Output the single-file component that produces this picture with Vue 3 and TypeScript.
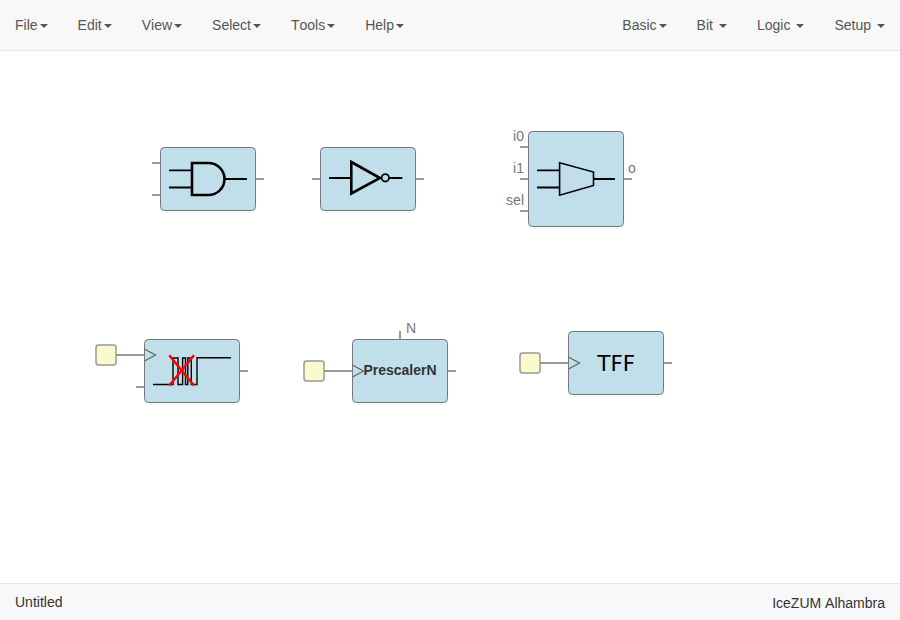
<script setup lang="ts">
interface MenuItem {
  label: string
  spaced?: boolean
}

interface Port {
  x: number
  y: number
  vertical?: boolean
}

interface Block {
  id: string
  x: number
  y: number
  height: number
  ports: Port[]
  clock?: number
}

interface Label {
  text: string
  x: number
  y: number
  end?: boolean
}

const editMenus: MenuItem[] = [
  { label: 'File' },
  { label: 'Edit' },
  { label: 'View' },
  { label: 'Select' },
  { label: 'Tools' },
  { label: 'Help' },
]

const blockMenus: MenuItem[] = [
  { label: 'Basic' },
  { label: 'Bit', spaced: true },
  { label: 'Logic', spaced: true },
  { label: 'Setup', spaced: true },
]

const blocks: Block[] = [
  { id: 'and', x: 160, y: 96, height: 64, ports: [{ x: -8, y: 16 }, { x: -8, y: 48 }, { x: 96, y: 32 }] },
  { id: 'not', x: 320, y: 96, height: 64, ports: [{ x: -8, y: 32 }, { x: 96, y: 32 }] },
  { id: 'mux', x: 528, y: 80, height: 96, ports: [{ x: -8, y: 16 }, { x: -8, y: 48 }, { x: -8, y: 80 }, { x: 96, y: 48 }] },
  { id: 'debouncer', x: 144, y: 288, height: 64, clock: 16, ports: [{ x: -8, y: 48 }, { x: 96, y: 32 }] },
  { id: 'prescaler', x: 352, y: 288, height: 64, clock: 32, ports: [{ x: 96, y: 32 }, { x: 48, y: -8, vertical: true }] },
  { id: 'tff', x: 568, y: 280, height: 64, clock: 32, ports: [{ x: 96, y: 32 }] },
]

const labels: Label[] = [
  { text: 'i0', x: 524, y: 90, end: true },
  { text: 'i1', x: 524, y: 122, end: true },
  { text: 'sel', x: 524, y: 154, end: true },
  { text: 'o', x: 628, y: 122 },
  { text: 'N', x: 406, y: 282 },
]

const portPath = (p: Port): string => `M${p.x} ${p.y}${p.vertical ? 'v8' : 'h8'}`
</script>

<template>
  <div class="app">
    <nav class="navbar">
      <ul class="menu">
        <li v-for="m in editMenus" :key="m.label">{{ m.label }}<b class="caret"></b></li>
      </ul>
      <ul class="menu">
        <li v-for="m in blockMenus" :key="m.label" :class="{ spaced: m.spaced }">{{ m.label }}<b class="caret"></b></li>
      </ul>
    </nav>

    <main class="paper">
      <svg width="900" height="532" viewBox="0 0 900 532">
        <g v-for="b in blocks" :key="b.id" :transform="`translate(${b.x} ${b.y})`">
          <path v-for="(p, i) in b.ports" :key="i" class="wire" :d="portPath(p)" />
          <template v-if="b.clock !== undefined">
            <path class="wire" :d="`M-28 ${b.clock}H0`" />
            <rect class="clock-source" x="-48" :y="b.clock - 10" width="20" height="20" rx="2.5" />
          </template>
          <rect class="body" x="0.5" y="0.5" width="95" :height="b.height - 1" rx="4" />
          <path v-if="b.clock !== undefined" class="clock-edge" :d="`M0.5 ${b.clock - 6}L11.5 ${b.clock}L0.5 ${b.clock + 6}`" />

          <g v-if="b.id === 'and'" class="symbol">
            <path class="medium" d="M9 23.3H32M9 40.5H32M65 32H87" />
            <path class="heavy" d="M32 16H48.3A16.2 16 0 0 1 48.3 48H32Z" />
          </g>
          <g v-else-if="b.id === 'not'" class="symbol">
            <path class="medium" d="M9 31H31M69 31H82.3" />
            <path class="heavy" d="M31.3 15L60 31L31.3 46.5Z" />
            <circle class="medium" cx="65.3" cy="30.8" r="3.7" />
          </g>
          <g v-else-if="b.id === 'mux'" class="symbol">
            <path class="medium" d="M9 39.3H31M9 56.5H31M66 48H87" />
            <path class="light" d="M31.6 31.7L65.5 41V54.5L31.6 64.2Z" />
          </g>
          <g v-else-if="b.id === 'debouncer'" class="symbol">
            <path class="thin" d="M9 45.5H29V19H34V45.5H38.6V19H41.5V45.5H43.8V19H47.3V45.5H53V18.8H87" />
            <path class="cross" d="M25.3 16.3L50 46.5M50 16.3L25.3 46.5" />
          </g>
          <text v-else-if="b.id === 'prescaler'" class="name" x="48" y="36">PrescalerN</text>
          <text v-else-if="b.id === 'tff'" class="big-name" x="48.3" y="40">TFF</text>
        </g>

        <text v-for="l in labels" :key="l.text" class="port-label" :class="{ end: l.end }" :x="l.x" :y="l.y">{{ l.text }}</text>
      </svg>
    </main>

    <footer class="statusbar">
      <span>Untitled</span>
      <span class="board">IceZUM Alhambra</span>
    </footer>
  </div>
</template>

<style>
body {
  margin: 0;
  overflow: hidden;
}
</style>

<style scoped>
.app {
  display: flex;
  flex-direction: column;
  height: 620px;
  box-sizing: border-box;
  background: #fff;
  color: #333;
  font-family: "Liberation Sans", Arial, sans-serif;
  font-size: 14px;
  font-kerning: none;
  line-height: 20px;
}

.navbar {
  display: flex;
  justify-content: space-between;
  height: 50px;
  background: #f8f8f8;
  border-bottom: 1px solid #e7e7e7;
  color: #555;
}

.menu {
  display: flex;
  margin: 0;
  padding: 0;
  list-style: none;
}

.menu li {
  padding: 15px;
}

.caret {
  display: inline-block;
  margin-left: 2px;
  vertical-align: middle;
  border-top: 4px solid;
  border-left: 4px solid transparent;
  border-right: 4px solid transparent;
}

.spaced .caret {
  margin-left: 6px;
}

.paper {
  flex: 1;
  min-height: 0;
  overflow: hidden;
}

.paper svg {
  display: block;
}

.wire {
  fill: none;
  stroke: #777;
  stroke-width: 1.5;
}

.body {
  fill: #c0dfeb;
  stroke: #777;
}

.clock-source {
  fill: #fbfacb;
  stroke: #999;
  stroke-width: 1.5;
}

.clock-edge {
  fill: none;
  stroke: #666;
  stroke-width: 1.3;
}

.symbol {
  fill: none;
  stroke: #000;
}

.heavy {
  stroke-width: 2.6;
}

.medium {
  stroke-width: 1.8;
}

.light {
  stroke-width: 1.6;
}

.thin {
  stroke-width: 1.4;
}

.cross {
  stroke: #f00;
  stroke-width: 2.5;
}

.name {
  fill: #333;
  font-weight: bold;
  text-anchor: middle;
}

.big-name {
  fill: #000;
  font-family: "DejaVu Sans", sans-serif;
  font-size: 21.5px;
  text-anchor: middle;
}

.port-label {
  fill: #777;
}

.port-label.end {
  text-anchor: end;
}

.statusbar {
  display: flex;
  justify-content: space-between;
  height: 36px;
  padding: 0 15px;
  background: #f8f8f8;
  border-top: 1px solid #e7e7e7;
  line-height: 36px;
}

.board {
  padding-top: 1px;
}
</style>
